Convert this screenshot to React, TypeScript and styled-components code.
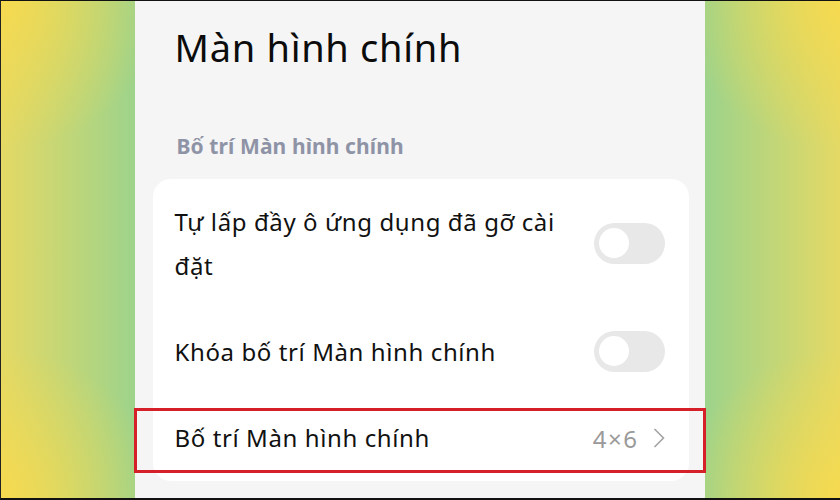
import React from 'react';
import styled, { createGlobalStyle } from 'styled-components';

const GlobalStyle = createGlobalStyle`
  html, body {
    margin: 0;
    padding: 0;
  }
  body {
    font-family: 'Noto Sans', 'Open Sans', sans-serif;
  }
`;

const Frame = styled.div`
  width: 840px;
  height: 500px;
  box-sizing: border-box;
  border-top: 1px solid #111;
  border-left: 1px solid #222;
  border-bottom: 2px solid #111;
  display: flex;
  justify-content: center;
  overflow: hidden;
  background:
    radial-gradient(ellipse 160px 150px at 0 0, rgba(252, 218, 72, 0.75), rgba(252, 218, 72, 0)),
    radial-gradient(ellipse 160px 150px at 0 100%, rgba(252, 218, 72, 0.75), rgba(252, 218, 72, 0)),
    radial-gradient(ellipse 160px 150px at 100% 0, rgba(252, 218, 72, 0.75), rgba(252, 218, 72, 0)),
    radial-gradient(ellipse 160px 150px at 100% 100%, rgba(252, 218, 72, 0.75), rgba(252, 218, 72, 0)),
    linear-gradient(90deg, #e4d965 0%, #9dd38b 16%, #9dd38b 84%, #e4d965 100%);
`;

const Panel = styled.main`
  width: 570px;
  margin-left: -2px;
  background: #f5f5f5;
  display: flex;
  flex-direction: column;
`;

const Title = styled.h1`
  margin: 0;
  padding: 20px 0 0 40px;
  height: 60px;
  font-size: 38px;
  font-weight: 400;
  letter-spacing: 0.7px;
  color: #0c0c0c;
  line-height: 52px;
`;

const SectionLabel = styled.h2`
  margin: 0;
  padding: 50px 0 0 42px;
  height: 48px;
  font-size: 21px;
  font-weight: 700;
  color: #8e93a6;
  line-height: 30px;
  letter-spacing: 0.1px;
`;

const Card = styled.section`
  margin: 0 16px 0 18px;
  background: #fff;
  border-radius: 18px;
  display: flex;
  flex-direction: column;
`;

const Row = styled.div<{ $tall?: boolean }>`
  position: relative;
  display: flex;
  align-items: center;
  gap: 24px;
  padding: 0 24px 0 22px;
  height: ${(p) => (p.$tall ? 130 : 86)}px;
`;

const Label = styled.div`
  flex: 1;
  font-size: 24px;
  line-height: 44px;
  color: #111;
  letter-spacing: 0.6px;
`;

const Track = styled.div`
  width: 71px;
  height: 41px;
  border-radius: 21px;
  background: #e8e8e8;
  display: flex;
  align-items: center;
  padding-left: 5px;
  box-sizing: border-box;
  flex: none;
  margin-top: -2px;
`;

const Knob = styled.div`
  width: 30px;
  height: 30px;
  border-radius: 50%;
  background: #fff;
`;

const Value = styled.span`
  display: flex;
  align-items: center;
  gap: 14px;
  font-size: 24px;
  letter-spacing: 1.5px;
  color: #9a9a9a;
  flex: none;
`;

const Highlight = styled.div`
  position: absolute;
  left: -19px;
  right: -17px;
  top: 13px;
  bottom: 8px;
  border: 3px solid #d51f29;
  pointer-events: none;
`;

const Toggle = () => (
  <Track>
    <Knob />
  </Track>
);

const Chevron = () => (
  <svg width="12" height="22" viewBox="0 0 12 22">
    <polyline points="1.5,2 10.5,11 1.5,20" fill="none" stroke="#a3a3a3" strokeWidth="1.6" />
  </svg>
);

export default function App() {
  return (
    <>
      <GlobalStyle />
      <Frame>
        <Panel>
          <Title>Màn hình chính</Title>
          <SectionLabel>Bố trí Màn hình chính</SectionLabel>
          <Card>
            <Row $tall>
              <Label>
                Tự lấp đầy ô ứng dụng đã gỡ cài
                <br />
                đặt
              </Label>
              <Toggle />
            </Row>
            <Row>
              <Label>Khóa bố trí Màn hình chính</Label>
              <Toggle />
            </Row>
            <Row>
              <Label>Bố trí Màn hình chính</Label>
              <Value>
                4×6
                <Chevron />
              </Value>
              <Highlight />
            </Row>
          </Card>
        </Panel>
      </Frame>
    </>
  );
}
